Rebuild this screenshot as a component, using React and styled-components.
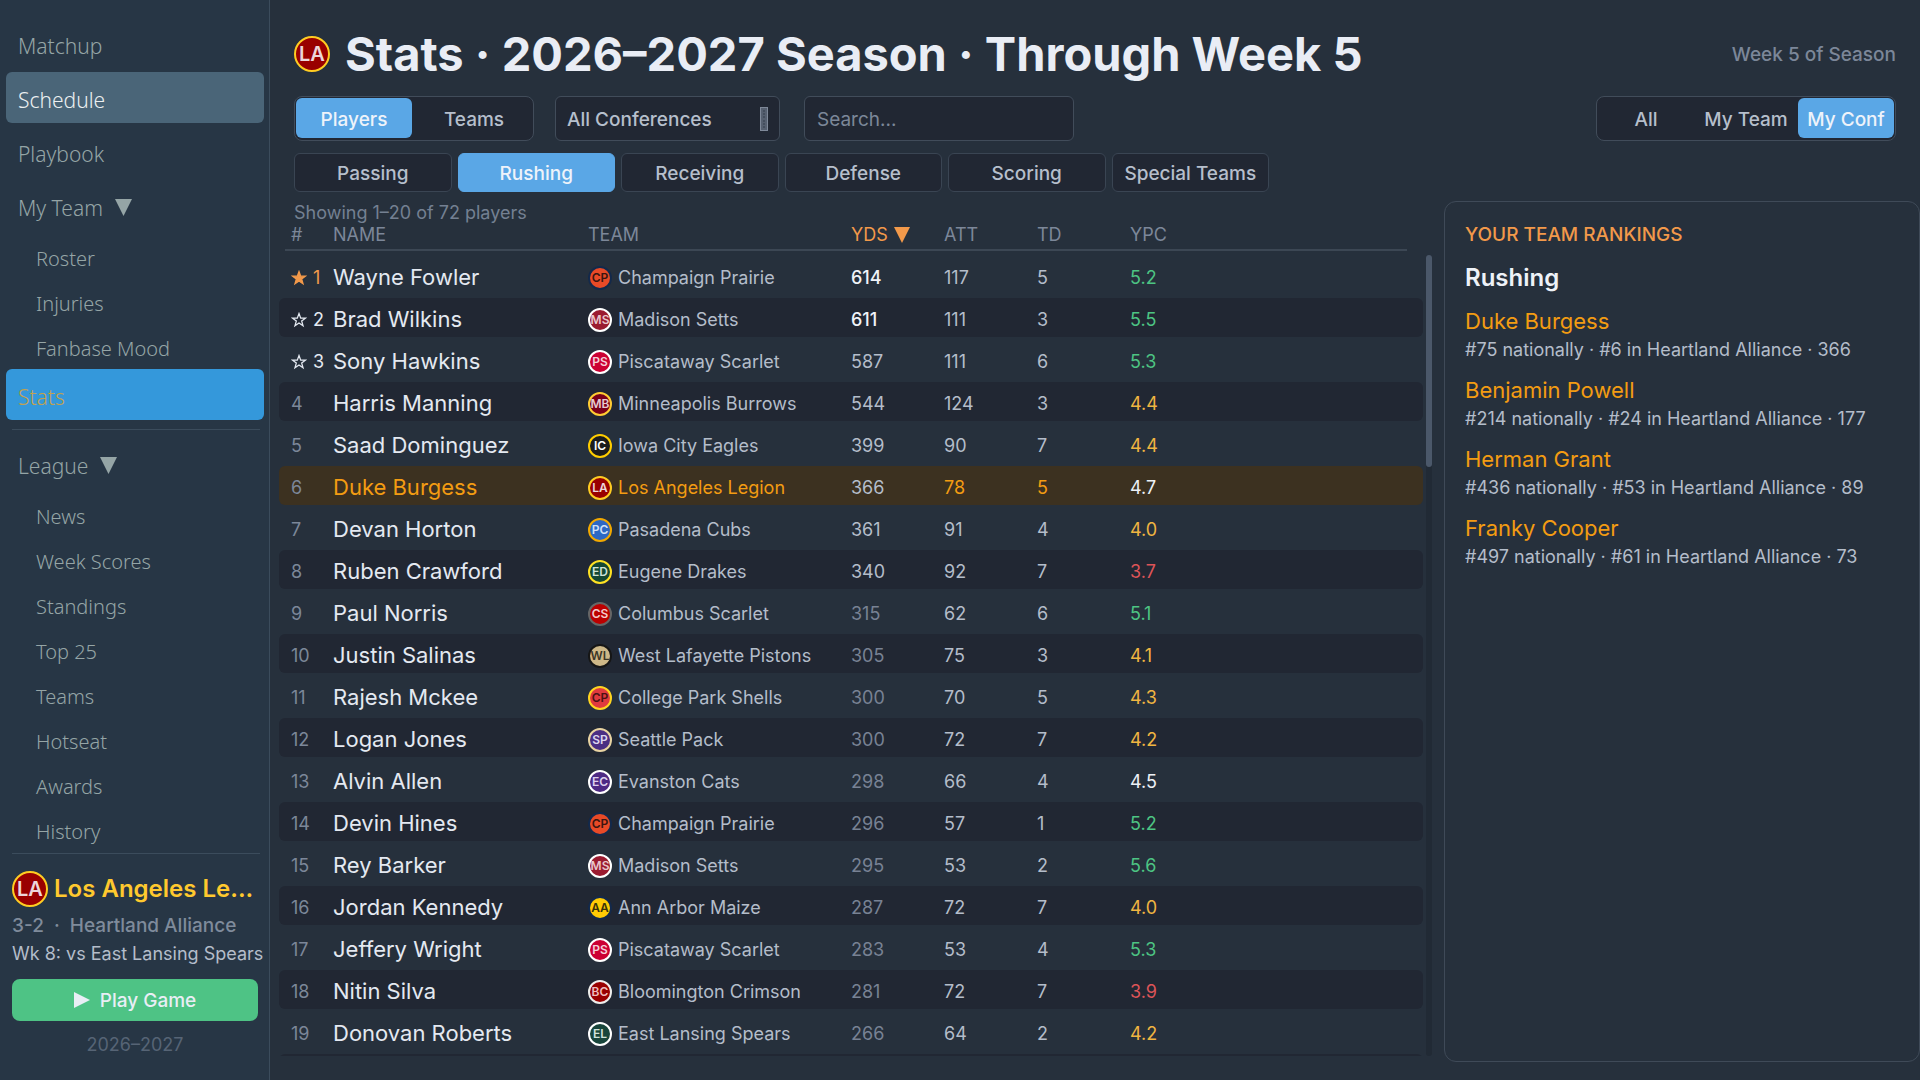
import { useState } from "react";
import styled, { createGlobalStyle } from "styled-components";

const mainNav = [
  { name: "Matchup" },
  { name: "Schedule", hover: true },
  { name: "Playbook" },
  { name: "My Team", open: true },
  { name: "Roster", sub: true },
  { name: "Injuries", sub: true },
  { name: "Fanbase Mood", sub: true },
  { name: "Stats", active: true },
];

const leagueNav = [
  { name: "League", open: true },
  { name: "News", sub: true },
  { name: "Week Scores", sub: true },
  { name: "Standings", sub: true },
  { name: "Top 25", sub: true },
  { name: "Teams", sub: true },
  { name: "Hotseat", sub: true },
  { name: "Awards", sub: true },
  { name: "History", sub: true },
];

const categories = [
  "Passing",
  "Rushing",
  "Receiving",
  "Defense",
  "Scoring",
  "Special Teams",
];

// name: [initials, fill, ring, text]
const teams = {
  "Champaign Prairie": ["CP", "#e84a27", "#13294b", "#3a1410"],
  "Madison Setts": ["MS", "#9b1b30", "#ffffff", "#e9c4ca"],
  "Piscataway Scarlet": ["PS", "#cc0033", "#ffffff", "#f5cdd8"],
  "Minneapolis Burrows": ["MB", "#7a0019", "#ffcc33", "#e6cbd0"],
  "Iowa City Eagles": ["IC", "#1c1c1c", "#ffcd00", "#ffffff"],
  "Los Angeles Legion": ["LA", "#990000", "#ffcc22", "#ecd6da"],
  "Pasadena Cubs": ["PC", "#2d68c4", "#f2a900", "#cfe0f8"],
  "Eugene Drakes": ["ED", "#154733", "#fee123", "#cfe3d8"],
  "Columbus Scarlet": ["CS", "#bb0000", "#666666", "#f3cccc"],
  "West Lafayette Pistons": ["WL", "#ceb888", "#161616", "#3c3626"],
  "College Park Shells": ["CP", "#e03a3e", "#ffd520", "#4a1214"],
  "Seattle Pack": ["SP", "#4b2e83", "#e8d3a2", "#ddd4ee"],
  "Evanston Cats": ["EC", "#4e2a84", "#ffffff", "#ddd0ee"],
  "Ann Arbor Maize": ["AA", "#ffcb05", "#13294b", "#3a3208"],
  "Bloomington Crimson": ["BC", "#990000", "#eeedeb", "#eebcbc"],
  "East Lansing Spears": ["EL", "#18453b", "#ffffff", "#d0e2dc"],
};

const players = [
  ["Wayne Fowler", "Champaign Prairie", 614, 117, 5, "5.2"],
  ["Brad Wilkins", "Madison Setts", 611, 111, 3, "5.5"],
  ["Sony Hawkins", "Piscataway Scarlet", 587, 111, 6, "5.3"],
  ["Harris Manning", "Minneapolis Burrows", 544, 124, 3, "4.4"],
  ["Saad Dominguez", "Iowa City Eagles", 399, 90, 7, "4.4"],
  ["Duke Burgess", "Los Angeles Legion", 366, 78, 5, "4.7"],
  ["Devan Horton", "Pasadena Cubs", 361, 91, 4, "4.0"],
  ["Ruben Crawford", "Eugene Drakes", 340, 92, 7, "3.7"],
  ["Paul Norris", "Columbus Scarlet", 315, 62, 6, "5.1"],
  ["Justin Salinas", "West Lafayette Pistons", 305, 75, 3, "4.1"],
  ["Rajesh Mckee", "College Park Shells", 300, 70, 5, "4.3"],
  ["Logan Jones", "Seattle Pack", 300, 72, 7, "4.2"],
  ["Alvin Allen", "Evanston Cats", 298, 66, 4, "4.5"],
  ["Devin Hines", "Champaign Prairie", 296, 57, 1, "5.2"],
  ["Rey Barker", "Madison Setts", 295, 53, 2, "5.6"],
  ["Jordan Kennedy", "Ann Arbor Maize", 287, 72, 7, "4.0"],
  ["Jeffery Wright", "Piscataway Scarlet", 283, 53, 4, "5.3"],
  ["Nitin Silva", "Bloomington Crimson", 281, 72, 7, "3.9"],
  ["Donovan Roberts", "East Lansing Spears", 266, 64, 2, "4.2"],
];

const rankings = [
  { name: "Duke Burgess", text: "#75 nationally · #6 in Heartland Alliance · 366" },
  { name: "Benjamin Powell", text: "#214 nationally · #24 in Heartland Alliance · 177" },
  { name: "Herman Grant", text: "#436 nationally · #53 in Heartland Alliance · 89" },
  { name: "Franky Cooper", text: "#497 nationally · #61 in Heartland Alliance · 73" },
];

const myTeam = "Los Angeles Legion";

const shorten = (text, max) =>
  text.length > max ? `${text.slice(0, max)}...` : text;

const ydsColor = (yds) => {
  if (yds > 600) return "#f0f3f8";
  if (yds >= 340) return "#b4bdca";
  return "#788294";
};

const ypcColor = (ypc) => {
  if (ypc > 5) return "#4dc483";
  if (ypc >= 4.5) return "#edf1f6";
  if (ypc >= 4) return "#f0b541";
  return "#dd5458";
};

const TeamLogo = ({ team, size, width = 2 }) => {
  const [initials, fill, ring, color] = teams[team];
  return (
    <Logo width={size} height={size} viewBox={`0 0 ${size} ${size}`} aria-hidden="true">
      <circle
        cx={size / 2}
        cy={size / 2}
        r={size / 2 - width / 2}
        fill={fill}
        stroke={ring}
        strokeWidth={width}
      />
      <text
        x={size / 2}
        y={size / 2 + (size > 30 ? 7 : 4)}
        textAnchor="middle"
        fontSize={size > 30 ? 20 : 12}
        fontWeight="600"
        fill={color}
      >
        {initials}
      </text>
    </Logo>
  );
};

const Triangle = ({ size, right }) => (
  <svg width={size} height={size} viewBox="0 0 16 16" aria-hidden="true">
    <path d={right ? "M0 0L16 8L0 16Z" : "M0 0H16L8 16Z"} fill="currentColor" />
  </svg>
);

const NavList = ({ items }) =>
  items.map((item) => (
    <NavItem
      key={item.name}
      href="#"
      $sub={item.sub}
      $hover={item.hover}
      $active={item.active}
    >
      {item.name}
      {item.open && <Triangle size={17} />}
    </NavItem>
  ));

const Rank = ({ place }) => {
  if (place > 3) return <RankCell>{place}</RankCell>;
  return (
    <RankCell $star={place === 1 ? "#f2994a" : "#e4e9f1"}>
      <svg width="16" height="16" viewBox="0 0 16 16" aria-hidden="true">
        <path
          d="M8 1.6L9.7 6.2H14.4L10.7 9.1L12 13.8L8 11L4 13.8L5.3 9.1L1.6 6.2H6.3Z"
          fill={place === 1 ? "currentColor" : "none"}
          stroke="currentColor"
          strokeWidth="1.3"
        />
      </svg>
      {place}
    </RankCell>
  );
};

const App = () => {
  const [view, setView] = useState("Players");
  const [scope, setScope] = useState("My Conf");
  const [category, setCategory] = useState("Rushing");

  return (
    <>
      <GlobalStyle />
      <Page>
        <Sidebar>
          <Nav>
            <NavList items={mainNav} />
            <Divider />
            <NavList items={leagueNav} />
          </Nav>
          <Divider />
          <TeamCard>
            <TeamHead>
              <TeamLogo team={myTeam} size={36} />
              <TeamName>{shorten(myTeam, 14)}</TeamName>
            </TeamHead>
            <TeamRecord>3-2 &nbsp;·&nbsp; Heartland Alliance</TeamRecord>
            <NextGame>Wk 8: vs East Lansing Spears</NextGame>
            <PlayButton>
              <Triangle size={16} right />
              Play Game
            </PlayButton>
            <SeasonText>2026–2027</SeasonText>
          </TeamCard>
        </Sidebar>

        <Main>
          <Header>
            <TeamLogo team={myTeam} size={36} />
            <Title>Stats · 2026–2027 Season · Through Week 5</Title>
            <WeekText>Week 5 of Season</WeekText>
          </Header>

          <Toolbar>
            <Segment>
              {["Players", "Teams"].map((name) => (
                <SegmentButton
                  key={name}
                  $width={116}
                  $active={view === name}
                  onClick={() => setView(name)}
                >
                  {name}
                </SegmentButton>
              ))}
            </Segment>
            <SelectBox>
              <Select aria-label="Conference">
                <option>All Conferences</option>
              </Select>
              <svg width="8" height="24" viewBox="0 0 8 24" aria-hidden="true">
                <rect x="0.5" y="0.5" width="7" height="23" fill="#566070" stroke="#7f8999" />
                <path d="M3 4H5M3 7H5M3 10H5M3 14H5M3 17H5M3 20H5" stroke="#323c4a" />
              </svg>
            </SelectBox>
            <Search type="text" placeholder="Search..." aria-label="Search" />
            <Spacer />
            <Segment>
              {["All", "My Team", "My Conf"].map((name) => (
                <SegmentButton
                  key={name}
                  $width={96}
                  $active={scope === name}
                  onClick={() => setScope(name)}
                >
                  {name}
                </SegmentButton>
              ))}
            </Segment>
          </Toolbar>

          <Tabs>
            {categories.map((name) => (
              <Tab
                key={name}
                $active={category === name}
                onClick={() => setCategory(name)}
              >
                {name}
              </Tab>
            ))}
          </Tabs>

          <Content>
            <ListColumn>
              <Showing>Showing 1–20 of 72 players</Showing>
              <Table>
                <Thead>
                  <HeadRow>
                    <th>#</th>
                    <th>NAME</th>
                    <th>TEAM</th>
                    <SortedTh aria-sort="descending">
                      YDS <Triangle size={16} />
                    </SortedTh>
                    <th>ATT</th>
                    <th>TD</th>
                    <th>YPC</th>
                  </HeadRow>
                </Thead>
                <Tbody>
                  {players.map(([name, team, yds, att, td, ypc], i) => {
                    const mine = team === myTeam;
                    return (
                      <Row key={name} $mine={mine}>
                        <Rank place={i + 1} />
                        <NameCell $mine={mine}>{name}</NameCell>
                        <TeamCell $mine={mine}>
                          <TeamLogo team={team} size={24} />
                          {team}
                        </TeamCell>
                        <Cell $color={ydsColor(yds)} $bold={yds > 600}>
                          {yds}
                        </Cell>
                        <Cell $color={mine && "#f39c12"}>{att}</Cell>
                        <Cell $color={mine && "#f39c12"}>{td}</Cell>
                        <Cell $color={ypcColor(Number(ypc))}>{ypc}</Cell>
                      </Row>
                    );
                  })}
                  <Row aria-hidden="true" />
                </Tbody>
              </Table>
            </ListColumn>
            <ScrollTrack>
              <ScrollThumb />
            </ScrollTrack>
            <Panel>
              <PanelLabel>YOUR TEAM RANKINGS</PanelLabel>
              <PanelTitle>Rushing</PanelTitle>
              {rankings.map((item) => (
                <Ranking key={item.name}>
                  <RankingName>{item.name}</RankingName>
                  <RankingText>{item.text}</RankingText>
                </Ranking>
              ))}
            </Panel>
          </Content>
        </Main>
      </Page>
    </>
  );
};

export default App;

const GlobalStyle = createGlobalStyle`
  * {
    box-sizing: border-box;
  }
  body {
    margin: 0;
    background: #26303c;
    color: #e4e9f1;
    font-family: Inter, "Liberation Sans", sans-serif;
    font-size: 18px;
  }
  button, input, select {
    font-family: inherit;
  }
`;

const Page = styled.div`
  display: flex;
  height: 100vh;
`;

const Sidebar = styled.aside`
  display: flex;
  flex-direction: column;
  flex: 0 0 270px;
  min-width: 0;
  background: #273645;
  border-right: 1px solid #3b4c5c;
`;

const Nav = styled.nav`
  display: flex;
  flex-direction: column;
  gap: 3px;
  padding: 18px 5px 4px 6px;
`;

const NavItem = styled.a`
  display: flex;
  align-items: center;
  gap: 12px;
  height: ${(props) => (props.$sub ? "42px" : "51px")};
  padding: ${(props) => (props.$sub ? "6px 0 0 30px" : "4px 0 0 12px")};
  border-radius: 6px;
  background: ${(props) =>
    props.$active ? "#3498db" : props.$hover ? "#4a6578" : "transparent"};
  color: ${(props) =>
    props.$active ? "#c2a24e" : props.$hover ? "#ecf0f1" : "#95a5a6"};
  font-family: "Noto Sans", sans-serif;
  font-size: ${(props) => (props.$sub ? "20px" : "21px")};
  font-weight: 300;
  text-decoration: none;
`;

const Divider = styled.hr`
  width: 248px;
  height: 1px;
  margin: 6px 0 5px 6px;
  border: none;
  background: #3b4c5c;

  ${Sidebar} > & {
    margin: 0 0 0 12px;
  }
`;

const TeamCard = styled.div`
  display: flex;
  flex-direction: column;
  padding: 17px 11px 0 12px;
`;

const TeamHead = styled.div`
  display: flex;
  align-items: center;
  gap: 6px;
`;

const TeamName = styled.div`
  color: #ffc92e;
  font-size: 24px;
  font-weight: 600;
  line-height: 36px;
  white-space: nowrap;
`;

const TeamRecord = styled.div`
  margin-top: 6px;
  color: #7f8b9b;
  font-size: 19px;
  font-weight: 500;
  line-height: 26px;
`;

const NextGame = styled.div`
  margin-top: 2px;
  color: #b4bdca;
  font-size: 18px;
  line-height: 26px;
  white-space: nowrap;
`;

const PlayButton = styled.button`
  display: flex;
  align-items: center;
  justify-content: center;
  gap: 10px;
  height: 42px;
  margin-top: 12px;
  border: none;
  border-radius: 8px;
  background: #4ec385;
  color: #e9eef5;
  font-size: 19px;
  font-weight: 500;
`;

const SeasonText = styled.div`
  margin-top: 12px;
  color: #566475;
  font-size: 18px;
  line-height: 24px;
  text-align: center;
`;

const Logo = styled.svg`
  flex: none;
`;

const Main = styled.main`
  display: flex;
  flex: 1;
  flex-direction: column;
  min-width: 0;
`;

const Header = styled.header`
  display: flex;
  align-items: center;
  padding: 24px 24px 0;
`;

const Title = styled.h1`
  flex: 1;
  margin: 0 0 0 15px;
  color: #e9edf5;
  font-size: 47px;
  font-weight: 700;
  line-height: 60px;
`;

const WeekText = styled.div`
  color: #7c8799;
  font-size: 19px;
  font-weight: 500;
`;

const Toolbar = styled.div`
  display: flex;
  padding: 12px 24px 0;
`;

const Segment = styled.div`
  display: flex;
  gap: 4px;
  height: 45px;
  padding: 1px 1px 2px;
  border: 1px solid #414c5a;
  border-radius: 8px;
  background: #212733;
`;

const SegmentButton = styled.button`
  width: ${(props) => props.$width}px;
  padding: 2px 0 0;
  border: none;
  border-radius: 6px;
  background: ${(props) => (props.$active ? "#5aa7e6" : "transparent")};
  color: ${(props) => (props.$active ? "#eef3fa" : "#b6bfcc")};
  font-size: 19px;
  font-weight: 500;
  white-space: nowrap;
`;

const SelectBox = styled.div`
  display: flex;
  align-items: center;
  width: 225px;
  height: 45px;
  margin-left: 21px;
  padding-right: 11px;
  border: 1px solid #414c5a;
  border-radius: 6px;
  background: #212733;
`;

const Select = styled.select`
  flex: 1;
  padding: 2px 0 0 11px;
  border: none;
  background: transparent;
  color: #b6bfcc;
  font-size: 19px;
  font-weight: 500;
  appearance: none;
`;

const Search = styled.input`
  width: 270px;
  height: 45px;
  margin-left: 24px;
  padding: 2px 12px 0;
  border: 1px solid #414c5a;
  border-radius: 6px;
  background: #212733;
  color: #b6bfcc;
  font-size: 19px;

  &::placeholder {
    color: #7c8799;
  }
`;

const Spacer = styled.div`
  flex: 1;
`;

const Tabs = styled.div`
  display: grid;
  grid-template-columns: repeat(6, 1fr);
  gap: 6px;
  max-width: 975px;
  margin: 12px 24px 0;
`;

const Tab = styled.button`
  height: 39px;
  padding: 2px 0 0;
  border: 1px solid ${(props) => (props.$active ? "#5aa7e6" : "#3a4553")};
  border-radius: 6px;
  background: ${(props) => (props.$active ? "#5aa7e6" : "#212733")};
  color: ${(props) => (props.$active ? "#eef3fa" : "#b6bfcc")};
  font-size: 19px;
  font-weight: 500;
`;

const Content = styled.div`
  display: flex;
  flex: 1;
  min-height: 0;
  padding-top: 9px;
`;

const ListColumn = styled.div`
  display: flex;
  flex: 1;
  flex-direction: column;
  min-width: 0;
  padding: 0 3px 24px 9px;
`;

const Showing = styled.div`
  padding-left: 15px;
  color: #748092;
  font-size: 18px;
  line-height: 24px;
`;

const Table = styled.table`
  display: flex;
  flex: 1;
  flex-direction: column;
  min-height: 0;
`;

const Thead = styled.thead`
  display: block;
  margin: 0 16px 0 6px;
  padding-bottom: 4px;
  border-bottom: 2px solid #3c4754;
`;

const HeadRow = styled.tr`
  display: grid;
  grid-template-columns: 42px 255px 263px 93px 93px 93px 1fr;
  padding-left: 6px;

  th {
    padding: 0;
    color: #7c8799;
    font-size: 18px;
    font-weight: 400;
    line-height: 20px;
    text-align: left;
    white-space: nowrap;
  }
`;

const SortedTh = styled.th`
  && {
    display: flex;
    align-items: center;
    gap: 6px;
    color: #f2994a;
  }
`;

const Tbody = styled.tbody`
  display: block;
  flex: 1;
  min-height: 0;
  margin-top: 5px;
  overflow: hidden;
`;

const Row = styled.tr`
  display: grid;
  grid-template-columns: 42px 255px 263px 93px 93px 93px 1fr;
  align-items: center;
  height: 39px;
  margin-bottom: 3px;
  padding-left: 12px;
  border-radius: 6px;
  background: ${(props) => (props.$mine ? "#3c3120" : "transparent")};

  &:nth-child(even) {
    background: ${(props) => (props.$mine ? "#3c3120" : "#212733")};
  }
`;

const Cell = styled.td`
  padding: 4px 0 0;
  color: ${(props) => props.$color || "#b4bdca"};
  font-size: 18px;
  font-weight: ${(props) => (props.$bold ? 500 : 400)};
  white-space: nowrap;
`;

const RankCell = styled(Cell)`
  display: flex;
  align-items: center;
  gap: 6px;
  color: ${(props) => props.$star || "#7c8799"};
`;

const NameCell = styled(Cell)`
  padding-top: 2px;
  color: ${(props) => (props.$mine ? "#f39c12" : "#e4e9f1")};
  font-size: 22px;
`;

const TeamCell = styled(Cell)`
  display: flex;
  align-items: center;
  gap: 6px;
  color: ${(props) => (props.$mine ? "#f39c12" : "#b4bdca")};
`;

const ScrollTrack = styled.div`
  width: 6px;
  margin: 54px 12px 24px 0;
  border-radius: 3px;
  background: #212a35;
`;

const ScrollThumb = styled.div`
  width: 6px;
  height: 212px;
  border-radius: 3px;
  background: #4b586a;
`;

const Panel = styled.section`
  flex: 0 0 476px;
  margin-bottom: 18px;
  padding: 20px;
  border: 1px solid #3f4a58;
  border-radius: 12px;
`;

const PanelLabel = styled.div`
  color: #f2994a;
  font-size: 19px;
  font-weight: 500;
  line-height: 26px;
`;

const PanelTitle = styled.h2`
  margin: 14px 0 0;
  color: #eef2f8;
  font-size: 24px;
  font-weight: 600;
  line-height: 32px;
`;

const Ranking = styled.div`
  height: 69px;
  padding-top: 12px;
`;

const RankingName = styled.div`
  color: #f39c12;
  font-size: 22px;
  line-height: 30px;
`;

const RankingText = styled.div`
  color: #b4bdca;
  font-size: 18px;
  line-height: 28px;
`;
